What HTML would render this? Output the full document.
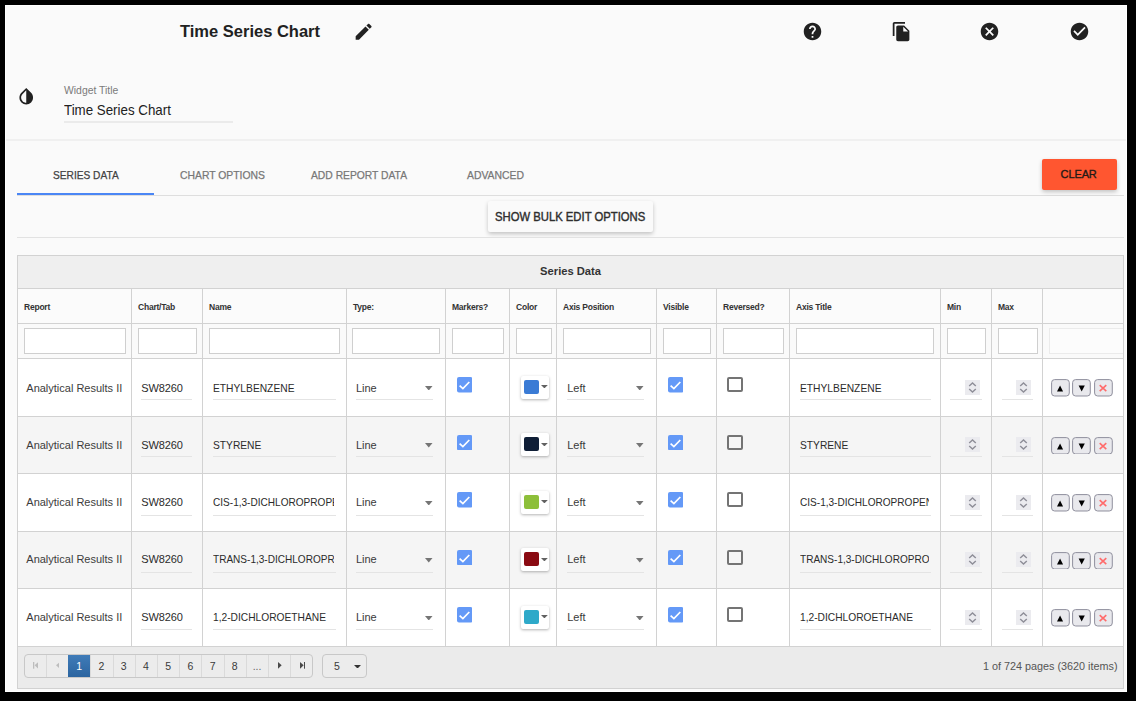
<!DOCTYPE html>
<html><head><meta charset="utf-8"><style>
html,body{margin:0;padding:0;background:#000;width:1136px;height:701px;overflow:hidden;position:relative;font-family:"Liberation Sans", sans-serif}
.t{position:absolute;line-height:1;white-space:nowrap}
</style></head><body>
<div style="position:absolute;left:5px;top:5px;width:1122px;height:687px;background:#fafafa;border:1px solid #fff;box-sizing:border-box"></div>
<div class="t" style="left:180px;top:23.03px;font-size:16.5px;color:#212121;font-weight:700;letter-spacing:0px;">Time Series Chart</div>
<svg style="position:absolute;left:353.35px;top:21.15px" width="21.3" height="21.3" viewBox="0 0 24 24"><path fill="#212121" d="M3 17.25V21h3.75L17.81 9.94l-3.75-3.75L3 17.25zM20.71 7.04c.39-.39.39-1.02 0-1.41l-2.34-2.34c-.39-.39-1.02-.39-1.41 0l-1.83 1.83 3.75 3.75 1.83-1.83z"/></svg>
<svg style="position:absolute;left:801.60px;top:21.30px" width="21" height="21" viewBox="0 0 24 24"><path fill="#212121" d="M12 2C6.48 2 2 6.48 2 12s4.48 10 10 10 10-4.48 10-10S17.52 2 12 2zm1 17h-2v-2h2v2zm2.07-7.75l-.9.92C13.45 12.9 13 13.5 13 15h-2v-.5c0-1.1.45-2.1 1.17-2.83l1.24-1.26c.37-.36.59-.86.59-1.41 0-1.1-.9-2-2-2s-2 .9-2 2H8c0-2.21 1.79-4 4-4s4 1.79 4 4c0 .88-.36 1.68-.93 2.25z"/></svg>
<svg style="position:absolute;left:891.00px;top:21.40px" width="21" height="21" viewBox="0 0 24 24"><path fill="#212121" d="M16 1H4c-1.1 0-2 .9-2 2v14h2V3h12V1zm-1 4l6 6v10c0 1.1-.9 2-2 2H7.99C6.89 23 6 22.1 6 21l.01-14c0-1.1.89-2 1.99-2h7zm-1 7h5.5L14 6.5V12z"/></svg>
<svg style="position:absolute;left:979.00px;top:21.40px" width="21" height="21" viewBox="0 0 24 24"><path fill="#212121" d="M12 2C6.47 2 2 6.47 2 12s4.47 10 10 10 10-4.47 10-10S17.53 2 12 2zm5 13.59L15.59 17 12 13.41 8.41 17 7 15.59 10.59 12 7 8.41 8.41 7 12 10.59 15.59 7 17 8.41 13.41 12 17 15.59z"/></svg>
<svg style="position:absolute;left:1068.50px;top:21.40px" width="21" height="21" viewBox="0 0 24 24"><path fill="#212121" d="M12 2C6.48 2 2 6.48 2 12s4.48 10 10 10 10-4.48 10-10S17.52 2 12 2zm-2 15l-5-5 1.41-1.41L10 14.17l7.59-7.59L19 8l-9 9z"/></svg>
<svg style="position:absolute;left:15.80px;top:86.25px" width="20.5" height="20.5" viewBox="0 0 24 24"><path fill="#212121" d="M17.66 7.93L12 2.27 6.34 7.93c-3.12 3.12-3.12 8.19 0 11.31C7.9 20.8 9.95 21.58 12 21.58c2.05 0 4.1-.78 5.66-2.34 3.12-3.12 3.12-8.19 0-11.31zM12 19.59c-1.6 0-3.11-.62-4.24-1.76C6.62 16.69 6 15.19 6 13.59s.62-3.11 1.76-4.24L12 5.1v14.49z"/></svg>
<div class="t" style="left:64px;top:85.60px;font-size:10.4px;color:#7b7b7b;font-weight:400;letter-spacing:0px;">Widget Title</div>
<div class="t" style="left:64.2px;top:102.64px;font-size:14.6px;color:#212121;font-weight:400;letter-spacing:0px;transform:scaleX(0.913);transform-origin:0 0">Time Series Chart</div>
<div style="position:absolute;left:64px;top:121px;width:169px;height:2px;background:#ebebeb"></div>
<div style="position:absolute;left:6px;top:139px;width:1120px;height:2px;background:#f0f0f0"></div>
<div class="t" style="left:53px;top:169.69px;font-size:11px;color:#424242;font-weight:400;letter-spacing:0px;-webkit-text-stroke:0.25px #424242;transform:scaleX(0.924);transform-origin:0 0">SERIES DATA</div>
<div class="t" style="left:179.8px;top:169.69px;font-size:11px;color:#777;font-weight:400;letter-spacing:0px;-webkit-text-stroke:0.25px #777;transform:scaleX(0.944);transform-origin:0 0">CHART OPTIONS</div>
<div class="t" style="left:311px;top:169.69px;font-size:11px;color:#777;font-weight:400;letter-spacing:0px;-webkit-text-stroke:0.25px #777;transform:scaleX(0.937);transform-origin:0 0">ADD REPORT DATA</div>
<div class="t" style="left:467.4px;top:169.69px;font-size:11px;color:#777;font-weight:400;letter-spacing:0px;-webkit-text-stroke:0.25px #777;transform:scaleX(0.945);transform-origin:0 0">ADVANCED</div>
<div style="position:absolute;left:17px;top:195px;width:1107px;height:1px;background:#dedede"></div>
<div style="position:absolute;left:17px;top:193px;width:137px;height:2px;background:#4a86f5"></div>
<div style="position:absolute;left:1041.8px;top:159px;width:75.2px;height:31px;background:#ff5630;border-radius:2px;box-shadow:0 2px 4px rgba(0,0,0,.22)"></div>
<div class="t" style="left:1060.6px;top:169.19px;font-size:11px;color:#241a16;font-weight:400;letter-spacing:-0.12px;-webkit-text-stroke:0.35px #241a16">CLEAR</div>
<div style="position:absolute;left:488px;top:201px;width:165px;height:31px;background:#fafafa;border-radius:2px;box-shadow:0 2px 4px rgba(0,0,0,.22)"></div>
<div class="t" style="left:495.2px;top:211.04px;font-size:12px;color:#2e2e2e;font-weight:400;letter-spacing:0px;-webkit-text-stroke:0.4px #2e2e2e;transform:scaleX(0.94);transform-origin:0 0">SHOW BULK EDIT OPTIONS</div>
<div style="position:absolute;left:17px;top:237px;width:1107px;height:1px;background:#e2e2e2"></div>
<div style="position:absolute;left:17px;top:255px;width:1107px;height:433px;background:#fff"></div>
<div style="position:absolute;left:17px;top:255px;width:1107px;height:33px;background:#efefef"></div>
<div style="position:absolute;left:17px;top:288px;width:1107px;height:35px;background:#fbfbfb"></div>
<div style="position:absolute;left:17px;top:323px;width:1107px;height:35px;background:#fafafa"></div>
<div style="position:absolute;left:17px;top:358px;width:1107px;height:58px;background:#fff"></div>
<div style="position:absolute;left:17px;top:416px;width:1107px;height:57px;background:#f5f5f5"></div>
<div style="position:absolute;left:17px;top:473px;width:1107px;height:58px;background:#fff"></div>
<div style="position:absolute;left:17px;top:531px;width:1107px;height:57px;background:#f5f5f5"></div>
<div style="position:absolute;left:17px;top:588px;width:1107px;height:58px;background:#fff"></div>
<div style="position:absolute;left:17px;top:646px;width:1107px;height:42px;background:#ebebeb"></div>
<div style="position:absolute;left:17px;top:255px;width:1107px;height:1px;background:#d2d2d2"></div>
<div style="position:absolute;left:17px;top:288px;width:1107px;height:1px;background:#d2d2d2"></div>
<div style="position:absolute;left:17px;top:323px;width:1107px;height:1px;background:#d2d2d2"></div>
<div style="position:absolute;left:17px;top:358px;width:1107px;height:1px;background:#d2d2d2"></div>
<div style="position:absolute;left:17px;top:416px;width:1107px;height:1px;background:#d2d2d2"></div>
<div style="position:absolute;left:17px;top:473px;width:1107px;height:1px;background:#d2d2d2"></div>
<div style="position:absolute;left:17px;top:531px;width:1107px;height:1px;background:#d2d2d2"></div>
<div style="position:absolute;left:17px;top:588px;width:1107px;height:1px;background:#d2d2d2"></div>
<div style="position:absolute;left:17px;top:646px;width:1107px;height:1px;background:#d2d2d2"></div>
<div style="position:absolute;left:17px;top:688px;width:1107px;height:1px;background:#d2d2d2"></div>
<div style="position:absolute;left:17px;top:255px;width:1px;height:434px;background:#d2d2d2"></div>
<div style="position:absolute;left:1123px;top:255px;width:1px;height:434px;background:#d2d2d2"></div>
<div style="position:absolute;left:131px;top:288px;width:1px;height:358px;background:#d2d2d2"></div>
<div style="position:absolute;left:202px;top:288px;width:1px;height:358px;background:#d2d2d2"></div>
<div style="position:absolute;left:346px;top:288px;width:1px;height:358px;background:#d2d2d2"></div>
<div style="position:absolute;left:445px;top:288px;width:1px;height:358px;background:#d2d2d2"></div>
<div style="position:absolute;left:509px;top:288px;width:1px;height:358px;background:#d2d2d2"></div>
<div style="position:absolute;left:556px;top:288px;width:1px;height:358px;background:#d2d2d2"></div>
<div style="position:absolute;left:656px;top:288px;width:1px;height:358px;background:#d2d2d2"></div>
<div style="position:absolute;left:716px;top:288px;width:1px;height:358px;background:#d2d2d2"></div>
<div style="position:absolute;left:789px;top:288px;width:1px;height:358px;background:#d2d2d2"></div>
<div style="position:absolute;left:940px;top:288px;width:1px;height:358px;background:#d2d2d2"></div>
<div style="position:absolute;left:991px;top:288px;width:1px;height:358px;background:#d2d2d2"></div>
<div style="position:absolute;left:1042px;top:288px;width:1px;height:358px;background:#d2d2d2"></div>
<div class="t" style="left:540.1px;top:265.72px;font-size:11.2px;color:#333;font-weight:700;letter-spacing:0px;">Series Data</div>
<div class="t" style="left:24px;top:302.60px;font-size:8.5px;color:#333;font-weight:700;letter-spacing:-0.22px;">Report</div>
<div class="t" style="left:138px;top:302.60px;font-size:8.5px;color:#333;font-weight:700;letter-spacing:-0.22px;">Chart/Tab</div>
<div class="t" style="left:209px;top:302.60px;font-size:8.5px;color:#333;font-weight:700;letter-spacing:-0.22px;">Name</div>
<div class="t" style="left:353px;top:302.60px;font-size:8.5px;color:#333;font-weight:700;letter-spacing:-0.22px;">Type:</div>
<div class="t" style="left:452px;top:302.60px;font-size:8.5px;color:#333;font-weight:700;letter-spacing:-0.22px;">Markers?</div>
<div class="t" style="left:516px;top:302.60px;font-size:8.5px;color:#333;font-weight:700;letter-spacing:-0.22px;">Color</div>
<div class="t" style="left:563px;top:302.60px;font-size:8.5px;color:#333;font-weight:700;letter-spacing:-0.22px;">Axis Position</div>
<div class="t" style="left:663px;top:302.60px;font-size:8.5px;color:#333;font-weight:700;letter-spacing:-0.22px;">Visible</div>
<div class="t" style="left:723px;top:302.60px;font-size:8.5px;color:#333;font-weight:700;letter-spacing:-0.22px;">Reversed?</div>
<div class="t" style="left:796px;top:302.60px;font-size:8.5px;color:#333;font-weight:700;letter-spacing:-0.22px;">Axis Title</div>
<div class="t" style="left:947px;top:302.60px;font-size:8.5px;color:#333;font-weight:700;letter-spacing:-0.22px;">Min</div>
<div class="t" style="left:998px;top:302.60px;font-size:8.5px;color:#333;font-weight:700;letter-spacing:-0.22px;">Max</div>
<div style="position:absolute;left:24px;top:328px;width:102px;height:26px;background:#fff;border:1px solid #cfcfcf;box-sizing:border-box"></div>
<div style="position:absolute;left:138px;top:328px;width:59px;height:26px;background:#fff;border:1px solid #cfcfcf;box-sizing:border-box"></div>
<div style="position:absolute;left:209px;top:328px;width:131px;height:26px;background:#fff;border:1px solid #cfcfcf;box-sizing:border-box"></div>
<div style="position:absolute;left:352px;top:328px;width:88px;height:26px;background:#fff;border:1px solid #cfcfcf;box-sizing:border-box"></div>
<div style="position:absolute;left:452px;top:328px;width:52px;height:26px;background:#fff;border:1px solid #cfcfcf;box-sizing:border-box"></div>
<div style="position:absolute;left:516px;top:328px;width:36px;height:26px;background:#fff;border:1px solid #cfcfcf;box-sizing:border-box"></div>
<div style="position:absolute;left:563px;top:328px;width:88px;height:26px;background:#fff;border:1px solid #cfcfcf;box-sizing:border-box"></div>
<div style="position:absolute;left:663px;top:328px;width:48px;height:26px;background:#fff;border:1px solid #cfcfcf;box-sizing:border-box"></div>
<div style="position:absolute;left:723px;top:328px;width:61px;height:26px;background:#fff;border:1px solid #cfcfcf;box-sizing:border-box"></div>
<div style="position:absolute;left:796px;top:328px;width:138px;height:26px;background:#fff;border:1px solid #cfcfcf;box-sizing:border-box"></div>
<div style="position:absolute;left:947px;top:328px;width:39px;height:26px;background:#fff;border:1px solid #cfcfcf;box-sizing:border-box"></div>
<div style="position:absolute;left:998px;top:328px;width:40px;height:26px;background:#fff;border:1px solid #cfcfcf;box-sizing:border-box"></div>
<div style="position:absolute;left:1049px;top:328px;width:74px;height:26px;background:#fcfcfc;border:1px solid #ebebeb;border-right:none;box-sizing:border-box"></div>
<div class="t" style="left:26.3px;top:382.59px;font-size:11px;color:#3c3c3c;font-weight:400;letter-spacing:0px;">Analytical Results II</div>
<div class="t" style="left:141.2px;top:382.59px;font-size:11px;color:#2b2b2b;font-weight:400;letter-spacing:-0.1px;">SW8260</div>
<div style="position:absolute;left:141px;top:399px;width:51px;height:1px;background:#e4e4e4"></div>
<div style="position:absolute;left:212.7px;top:379.59px;width:121.6px;height:18px;overflow:hidden"><div class="t" style="left:0;top:3px;font-size:11px;color:#2b2b2b;transform:scaleX(0.932);transform-origin:0 0">ETHYLBENZENE</div></div>
<div style="position:absolute;left:213px;top:399px;width:123px;height:1px;background:#e4e4e4"></div>
<div class="t" style="left:355.9px;top:382.59px;font-size:11px;color:#3a3a3a;font-weight:400;letter-spacing:0px;">Line</div>
<svg style="position:absolute;left:425.3px;top:385.50px" width="7.5" height="4.5" viewBox="0 0 7.5 4.5"><path d="M0 0H7.5L3.75 4.5Z" fill="#757575"/></svg>
<div style="position:absolute;left:356px;top:399px;width:77px;height:1px;background:#e4e4e4"></div>
<svg style="position:absolute;left:456.6px;top:377.1px" width="15.5" height="15.5" viewBox="0 0 15.5 15.5"><rect x="0" y="0" width="15.5" height="15.5" rx="2" fill="#6499f7"/><path d="M2.6 8.6 L5.9 11.6 L12.3 5" stroke="#fff" stroke-width="1.7" fill="none"/></svg>
<div style="position:absolute;left:520.8px;top:375.6px;width:28.4px;height:23px;background:#fff;border-radius:2px;box-shadow:0 1px 3px rgba(0,0,0,.3)"></div>
<div style="position:absolute;left:524px;top:379.7px;width:14.8px;height:14.3px;background:#3a7bd5;border-radius:2px"></div>
<svg style="position:absolute;left:541.2px;top:385.00px" width="6.8" height="3.4" viewBox="0 0 6.8 3.4"><path d="M0 0H6.8L3.4 3.4Z" fill="#616161"/></svg>
<div class="t" style="left:567.2px;top:382.59px;font-size:11px;color:#3a3a3a;font-weight:400;letter-spacing:0px;">Left</div>
<svg style="position:absolute;left:636.3px;top:385.50px" width="7.5" height="4.5" viewBox="0 0 7.5 4.5"><path d="M0 0H7.5L3.75 4.5Z" fill="#757575"/></svg>
<div style="position:absolute;left:567px;top:399px;width:77px;height:1px;background:#e4e4e4"></div>
<svg style="position:absolute;left:667.7px;top:377.1px" width="15.5" height="15.5" viewBox="0 0 15.5 15.5"><rect x="0" y="0" width="15.5" height="15.5" rx="2" fill="#6499f7"/><path d="M2.6 8.6 L5.9 11.6 L12.3 5" stroke="#fff" stroke-width="1.7" fill="none"/></svg>
<div style="position:absolute;left:727.3px;top:377.3px;width:15.5px;height:15px;border:2px solid #747474;border-radius:2px;box-sizing:border-box"></div>
<div style="position:absolute;left:799.6px;top:379.59px;width:129.4px;height:18px;overflow:hidden"><div class="t" style="left:0;top:3px;font-size:11px;color:#2b2b2b;transform:scaleX(0.932);transform-origin:0 0">ETHYLBENZENE</div></div>
<div style="position:absolute;left:800px;top:399px;width:131px;height:1px;background:#e4e4e4"></div>
<div style="position:absolute;left:965px;top:379.9px;width:15px;height:15px;background:#ebebef"></div>
<svg style="position:absolute;left:965px;top:379.90px" width="15" height="15" viewBox="0 0 15 15"><path d="M4.2 6.0 L7.5 2.9 L10.8 6.0 M4.2 9.0 L7.5 12.1 L10.8 9.0" stroke="#8e8e98" stroke-width="1.4" fill="none"/></svg>
<div style="position:absolute;left:950px;top:399px;width:32px;height:1px;background:#e4e4e4"></div>
<div style="position:absolute;left:1016px;top:379.9px;width:15px;height:15px;background:#ebebef"></div>
<svg style="position:absolute;left:1016px;top:379.90px" width="15" height="15" viewBox="0 0 15 15"><path d="M4.2 6.0 L7.5 2.9 L10.8 6.0 M4.2 9.0 L7.5 12.1 L10.8 9.0" stroke="#8e8e98" stroke-width="1.4" fill="none"/></svg>
<div style="position:absolute;left:1001.5px;top:399px;width:31.5px;height:1px;background:#e4e4e4"></div>
<svg style="position:absolute;left:1051.2px;top:379.2px" width="18.9" height="17.6" viewBox="0 0 18.9 17.6"><rect x="0.6" y="0.6" width="17.7" height="16.4" rx="3" fill="#e9e9ed" stroke="#8f8f9d" stroke-width="1"/><path d="M6.0 12.6 L9.1 6.6 L12.1 12.6Z" fill="#000"/></svg>
<svg style="position:absolute;left:1072.3px;top:379.2px" width="18.9" height="17.6" viewBox="0 0 18.9 17.6"><rect x="0.6" y="0.6" width="17.7" height="16.4" rx="3" fill="#e9e9ed" stroke="#8f8f9d" stroke-width="1"/><path d="M6.6 6.6 L12.8 6.6 L9.7 12.6Z" fill="#000"/></svg>
<svg style="position:absolute;left:1094.2px;top:379.2px" width="18.9" height="17.6" viewBox="0 0 18.9 17.6"><rect x="0.6" y="0.6" width="17.7" height="16.4" rx="3" fill="#e9e9ed" stroke="#8f8f9d" stroke-width="1"/><path d="M5.7 6.2 L12.3 12.2 M12.3 6.2 L5.7 12.2" stroke="#ff6b6b" stroke-width="1.6"/></svg>
<div class="t" style="left:26.3px;top:439.59px;font-size:11px;color:#3c3c3c;font-weight:400;letter-spacing:0px;">Analytical Results II</div>
<div class="t" style="left:141.2px;top:439.59px;font-size:11px;color:#2b2b2b;font-weight:400;letter-spacing:-0.1px;">SW8260</div>
<div style="position:absolute;left:141px;top:456px;width:51px;height:1px;background:#e4e4e4"></div>
<div style="position:absolute;left:212.7px;top:436.59px;width:121.6px;height:18px;overflow:hidden"><div class="t" style="left:0;top:3px;font-size:11px;color:#2b2b2b;transform:scaleX(0.93);transform-origin:0 0">STYRENE</div></div>
<div style="position:absolute;left:213px;top:456px;width:123px;height:1px;background:#e4e4e4"></div>
<div class="t" style="left:355.9px;top:439.59px;font-size:11px;color:#3a3a3a;font-weight:400;letter-spacing:0px;">Line</div>
<svg style="position:absolute;left:425.3px;top:443.00px" width="7.5" height="4.5" viewBox="0 0 7.5 4.5"><path d="M0 0H7.5L3.75 4.5Z" fill="#757575"/></svg>
<div style="position:absolute;left:356px;top:456px;width:77px;height:1px;background:#e4e4e4"></div>
<svg style="position:absolute;left:456.6px;top:434.6px" width="15.5" height="15.5" viewBox="0 0 15.5 15.5"><rect x="0" y="0" width="15.5" height="15.5" rx="2" fill="#6499f7"/><path d="M2.6 8.6 L5.9 11.6 L12.3 5" stroke="#fff" stroke-width="1.7" fill="none"/></svg>
<div style="position:absolute;left:520.8px;top:433.1px;width:28.4px;height:23px;background:#fff;border-radius:2px;box-shadow:0 1px 3px rgba(0,0,0,.3)"></div>
<div style="position:absolute;left:524px;top:437.2px;width:14.8px;height:14.3px;background:#0f1e36;border-radius:2px"></div>
<svg style="position:absolute;left:541.2px;top:442.50px" width="6.8" height="3.4" viewBox="0 0 6.8 3.4"><path d="M0 0H6.8L3.4 3.4Z" fill="#616161"/></svg>
<div class="t" style="left:567.2px;top:439.59px;font-size:11px;color:#3a3a3a;font-weight:400;letter-spacing:0px;">Left</div>
<svg style="position:absolute;left:636.3px;top:443.00px" width="7.5" height="4.5" viewBox="0 0 7.5 4.5"><path d="M0 0H7.5L3.75 4.5Z" fill="#757575"/></svg>
<div style="position:absolute;left:567px;top:456px;width:77px;height:1px;background:#e4e4e4"></div>
<svg style="position:absolute;left:667.7px;top:434.6px" width="15.5" height="15.5" viewBox="0 0 15.5 15.5"><rect x="0" y="0" width="15.5" height="15.5" rx="2" fill="#6499f7"/><path d="M2.6 8.6 L5.9 11.6 L12.3 5" stroke="#fff" stroke-width="1.7" fill="none"/></svg>
<div style="position:absolute;left:727.3px;top:434.8px;width:15.5px;height:15px;border:2px solid #747474;border-radius:2px;box-sizing:border-box"></div>
<div style="position:absolute;left:799.6px;top:436.59px;width:129.4px;height:18px;overflow:hidden"><div class="t" style="left:0;top:3px;font-size:11px;color:#2b2b2b;transform:scaleX(0.93);transform-origin:0 0">STYRENE</div></div>
<div style="position:absolute;left:800px;top:456px;width:131px;height:1px;background:#e4e4e4"></div>
<div style="position:absolute;left:965px;top:437.4px;width:15px;height:15px;background:#ebebef"></div>
<svg style="position:absolute;left:965px;top:437.40px" width="15" height="15" viewBox="0 0 15 15"><path d="M4.2 6.0 L7.5 2.9 L10.8 6.0 M4.2 9.0 L7.5 12.1 L10.8 9.0" stroke="#8e8e98" stroke-width="1.4" fill="none"/></svg>
<div style="position:absolute;left:950px;top:456px;width:32px;height:1px;background:#e4e4e4"></div>
<div style="position:absolute;left:1016px;top:437.4px;width:15px;height:15px;background:#ebebef"></div>
<svg style="position:absolute;left:1016px;top:437.40px" width="15" height="15" viewBox="0 0 15 15"><path d="M4.2 6.0 L7.5 2.9 L10.8 6.0 M4.2 9.0 L7.5 12.1 L10.8 9.0" stroke="#8e8e98" stroke-width="1.4" fill="none"/></svg>
<div style="position:absolute;left:1001.5px;top:456px;width:31.5px;height:1px;background:#e4e4e4"></div>
<svg style="position:absolute;left:1051.2px;top:436.7px" width="18.9" height="17.6" viewBox="0 0 18.9 17.6"><rect x="0.6" y="0.6" width="17.7" height="16.4" rx="3" fill="#e9e9ed" stroke="#8f8f9d" stroke-width="1"/><path d="M6.0 12.6 L9.1 6.6 L12.1 12.6Z" fill="#000"/></svg>
<svg style="position:absolute;left:1072.3px;top:436.7px" width="18.9" height="17.6" viewBox="0 0 18.9 17.6"><rect x="0.6" y="0.6" width="17.7" height="16.4" rx="3" fill="#e9e9ed" stroke="#8f8f9d" stroke-width="1"/><path d="M6.6 6.6 L12.8 6.6 L9.7 12.6Z" fill="#000"/></svg>
<svg style="position:absolute;left:1094.2px;top:436.7px" width="18.9" height="17.6" viewBox="0 0 18.9 17.6"><rect x="0.6" y="0.6" width="17.7" height="16.4" rx="3" fill="#e9e9ed" stroke="#8f8f9d" stroke-width="1"/><path d="M5.7 6.2 L12.3 12.2 M12.3 6.2 L5.7 12.2" stroke="#ff6b6b" stroke-width="1.6"/></svg>
<div class="t" style="left:26.3px;top:496.59px;font-size:11px;color:#3c3c3c;font-weight:400;letter-spacing:0px;">Analytical Results II</div>
<div class="t" style="left:141.2px;top:496.59px;font-size:11px;color:#2b2b2b;font-weight:400;letter-spacing:-0.1px;">SW8260</div>
<div style="position:absolute;left:141px;top:515px;width:51px;height:1px;background:#e4e4e4"></div>
<div style="position:absolute;left:212.7px;top:493.59px;width:121.6px;height:18px;overflow:hidden"><div class="t" style="left:0;top:3px;font-size:11px;color:#2b2b2b;transform:scaleX(0.915);transform-origin:0 0">CIS-1,3-DICHLOROPROPENE</div></div>
<div style="position:absolute;left:213px;top:515px;width:123px;height:1px;background:#e4e4e4"></div>
<div class="t" style="left:355.9px;top:496.59px;font-size:11px;color:#3a3a3a;font-weight:400;letter-spacing:0px;">Line</div>
<svg style="position:absolute;left:425.3px;top:500.50px" width="7.5" height="4.5" viewBox="0 0 7.5 4.5"><path d="M0 0H7.5L3.75 4.5Z" fill="#757575"/></svg>
<div style="position:absolute;left:356px;top:515px;width:77px;height:1px;background:#e4e4e4"></div>
<svg style="position:absolute;left:456.6px;top:492.1px" width="15.5" height="15.5" viewBox="0 0 15.5 15.5"><rect x="0" y="0" width="15.5" height="15.5" rx="2" fill="#6499f7"/><path d="M2.6 8.6 L5.9 11.6 L12.3 5" stroke="#fff" stroke-width="1.7" fill="none"/></svg>
<div style="position:absolute;left:520.8px;top:490.6px;width:28.4px;height:23px;background:#fff;border-radius:2px;box-shadow:0 1px 3px rgba(0,0,0,.3)"></div>
<div style="position:absolute;left:524px;top:494.7px;width:14.8px;height:14.3px;background:#8dbf3a;border-radius:2px"></div>
<svg style="position:absolute;left:541.2px;top:500.00px" width="6.8" height="3.4" viewBox="0 0 6.8 3.4"><path d="M0 0H6.8L3.4 3.4Z" fill="#616161"/></svg>
<div class="t" style="left:567.2px;top:496.59px;font-size:11px;color:#3a3a3a;font-weight:400;letter-spacing:0px;">Left</div>
<svg style="position:absolute;left:636.3px;top:500.50px" width="7.5" height="4.5" viewBox="0 0 7.5 4.5"><path d="M0 0H7.5L3.75 4.5Z" fill="#757575"/></svg>
<div style="position:absolute;left:567px;top:515px;width:77px;height:1px;background:#e4e4e4"></div>
<svg style="position:absolute;left:667.7px;top:492.1px" width="15.5" height="15.5" viewBox="0 0 15.5 15.5"><rect x="0" y="0" width="15.5" height="15.5" rx="2" fill="#6499f7"/><path d="M2.6 8.6 L5.9 11.6 L12.3 5" stroke="#fff" stroke-width="1.7" fill="none"/></svg>
<div style="position:absolute;left:727.3px;top:492.3px;width:15.5px;height:15px;border:2px solid #747474;border-radius:2px;box-sizing:border-box"></div>
<div style="position:absolute;left:799.6px;top:493.59px;width:129.4px;height:18px;overflow:hidden"><div class="t" style="left:0;top:3px;font-size:11px;color:#2b2b2b;transform:scaleX(0.915);transform-origin:0 0">CIS-1,3-DICHLOROPROPENE</div></div>
<div style="position:absolute;left:800px;top:515px;width:131px;height:1px;background:#e4e4e4"></div>
<div style="position:absolute;left:965px;top:494.9px;width:15px;height:15px;background:#ebebef"></div>
<svg style="position:absolute;left:965px;top:494.90px" width="15" height="15" viewBox="0 0 15 15"><path d="M4.2 6.0 L7.5 2.9 L10.8 6.0 M4.2 9.0 L7.5 12.1 L10.8 9.0" stroke="#8e8e98" stroke-width="1.4" fill="none"/></svg>
<div style="position:absolute;left:950px;top:515px;width:32px;height:1px;background:#e4e4e4"></div>
<div style="position:absolute;left:1016px;top:494.9px;width:15px;height:15px;background:#ebebef"></div>
<svg style="position:absolute;left:1016px;top:494.90px" width="15" height="15" viewBox="0 0 15 15"><path d="M4.2 6.0 L7.5 2.9 L10.8 6.0 M4.2 9.0 L7.5 12.1 L10.8 9.0" stroke="#8e8e98" stroke-width="1.4" fill="none"/></svg>
<div style="position:absolute;left:1001.5px;top:515px;width:31.5px;height:1px;background:#e4e4e4"></div>
<svg style="position:absolute;left:1051.2px;top:494.2px" width="18.9" height="17.6" viewBox="0 0 18.9 17.6"><rect x="0.6" y="0.6" width="17.7" height="16.4" rx="3" fill="#e9e9ed" stroke="#8f8f9d" stroke-width="1"/><path d="M6.0 12.6 L9.1 6.6 L12.1 12.6Z" fill="#000"/></svg>
<svg style="position:absolute;left:1072.3px;top:494.2px" width="18.9" height="17.6" viewBox="0 0 18.9 17.6"><rect x="0.6" y="0.6" width="17.7" height="16.4" rx="3" fill="#e9e9ed" stroke="#8f8f9d" stroke-width="1"/><path d="M6.6 6.6 L12.8 6.6 L9.7 12.6Z" fill="#000"/></svg>
<svg style="position:absolute;left:1094.2px;top:494.2px" width="18.9" height="17.6" viewBox="0 0 18.9 17.6"><rect x="0.6" y="0.6" width="17.7" height="16.4" rx="3" fill="#e9e9ed" stroke="#8f8f9d" stroke-width="1"/><path d="M5.7 6.2 L12.3 12.2 M12.3 6.2 L5.7 12.2" stroke="#ff6b6b" stroke-width="1.6"/></svg>
<div class="t" style="left:26.3px;top:554.29px;font-size:11px;color:#3c3c3c;font-weight:400;letter-spacing:0px;">Analytical Results II</div>
<div class="t" style="left:141.2px;top:554.29px;font-size:11px;color:#2b2b2b;font-weight:400;letter-spacing:-0.1px;">SW8260</div>
<div style="position:absolute;left:141px;top:572px;width:51px;height:1px;background:#e4e4e4"></div>
<div style="position:absolute;left:212.7px;top:551.29px;width:121.6px;height:18px;overflow:hidden"><div class="t" style="left:0;top:3px;font-size:11px;color:#2b2b2b;transform:scaleX(0.913);transform-origin:0 0">TRANS-1,3-DICHLOROPROPENE</div></div>
<div style="position:absolute;left:213px;top:572px;width:123px;height:1px;background:#e4e4e4"></div>
<div class="t" style="left:355.9px;top:554.29px;font-size:11px;color:#3a3a3a;font-weight:400;letter-spacing:0px;">Line</div>
<svg style="position:absolute;left:425.3px;top:558.00px" width="7.5" height="4.5" viewBox="0 0 7.5 4.5"><path d="M0 0H7.5L3.75 4.5Z" fill="#757575"/></svg>
<div style="position:absolute;left:356px;top:572px;width:77px;height:1px;background:#e4e4e4"></div>
<svg style="position:absolute;left:456.6px;top:549.6px" width="15.5" height="15.5" viewBox="0 0 15.5 15.5"><rect x="0" y="0" width="15.5" height="15.5" rx="2" fill="#6499f7"/><path d="M2.6 8.6 L5.9 11.6 L12.3 5" stroke="#fff" stroke-width="1.7" fill="none"/></svg>
<div style="position:absolute;left:520.8px;top:548.1px;width:28.4px;height:23px;background:#fff;border-radius:2px;box-shadow:0 1px 3px rgba(0,0,0,.3)"></div>
<div style="position:absolute;left:524px;top:552.2px;width:14.8px;height:14.3px;background:#8a0a12;border-radius:2px"></div>
<svg style="position:absolute;left:541.2px;top:557.50px" width="6.8" height="3.4" viewBox="0 0 6.8 3.4"><path d="M0 0H6.8L3.4 3.4Z" fill="#616161"/></svg>
<div class="t" style="left:567.2px;top:554.29px;font-size:11px;color:#3a3a3a;font-weight:400;letter-spacing:0px;">Left</div>
<svg style="position:absolute;left:636.3px;top:558.00px" width="7.5" height="4.5" viewBox="0 0 7.5 4.5"><path d="M0 0H7.5L3.75 4.5Z" fill="#757575"/></svg>
<div style="position:absolute;left:567px;top:572px;width:77px;height:1px;background:#e4e4e4"></div>
<svg style="position:absolute;left:667.7px;top:549.6px" width="15.5" height="15.5" viewBox="0 0 15.5 15.5"><rect x="0" y="0" width="15.5" height="15.5" rx="2" fill="#6499f7"/><path d="M2.6 8.6 L5.9 11.6 L12.3 5" stroke="#fff" stroke-width="1.7" fill="none"/></svg>
<div style="position:absolute;left:727.3px;top:549.8px;width:15.5px;height:15px;border:2px solid #747474;border-radius:2px;box-sizing:border-box"></div>
<div style="position:absolute;left:799.6px;top:551.29px;width:129.4px;height:18px;overflow:hidden"><div class="t" style="left:0;top:3px;font-size:11px;color:#2b2b2b;transform:scaleX(0.913);transform-origin:0 0">TRANS-1,3-DICHLOROPROPENE</div></div>
<div style="position:absolute;left:800px;top:572px;width:131px;height:1px;background:#e4e4e4"></div>
<div style="position:absolute;left:965px;top:552.4px;width:15px;height:15px;background:#ebebef"></div>
<svg style="position:absolute;left:965px;top:552.40px" width="15" height="15" viewBox="0 0 15 15"><path d="M4.2 6.0 L7.5 2.9 L10.8 6.0 M4.2 9.0 L7.5 12.1 L10.8 9.0" stroke="#8e8e98" stroke-width="1.4" fill="none"/></svg>
<div style="position:absolute;left:950px;top:572px;width:32px;height:1px;background:#e4e4e4"></div>
<div style="position:absolute;left:1016px;top:552.4px;width:15px;height:15px;background:#ebebef"></div>
<svg style="position:absolute;left:1016px;top:552.40px" width="15" height="15" viewBox="0 0 15 15"><path d="M4.2 6.0 L7.5 2.9 L10.8 6.0 M4.2 9.0 L7.5 12.1 L10.8 9.0" stroke="#8e8e98" stroke-width="1.4" fill="none"/></svg>
<div style="position:absolute;left:1001.5px;top:572px;width:31.5px;height:1px;background:#e4e4e4"></div>
<svg style="position:absolute;left:1051.2px;top:551.7px" width="18.9" height="17.6" viewBox="0 0 18.9 17.6"><rect x="0.6" y="0.6" width="17.7" height="16.4" rx="3" fill="#e9e9ed" stroke="#8f8f9d" stroke-width="1"/><path d="M6.0 12.6 L9.1 6.6 L12.1 12.6Z" fill="#000"/></svg>
<svg style="position:absolute;left:1072.3px;top:551.7px" width="18.9" height="17.6" viewBox="0 0 18.9 17.6"><rect x="0.6" y="0.6" width="17.7" height="16.4" rx="3" fill="#e9e9ed" stroke="#8f8f9d" stroke-width="1"/><path d="M6.6 6.6 L12.8 6.6 L9.7 12.6Z" fill="#000"/></svg>
<svg style="position:absolute;left:1094.2px;top:551.7px" width="18.9" height="17.6" viewBox="0 0 18.9 17.6"><rect x="0.6" y="0.6" width="17.7" height="16.4" rx="3" fill="#e9e9ed" stroke="#8f8f9d" stroke-width="1"/><path d="M5.7 6.2 L12.3 12.2 M12.3 6.2 L5.7 12.2" stroke="#ff6b6b" stroke-width="1.6"/></svg>
<div class="t" style="left:26.3px;top:611.59px;font-size:11px;color:#3c3c3c;font-weight:400;letter-spacing:0px;">Analytical Results II</div>
<div class="t" style="left:141.2px;top:611.59px;font-size:11px;color:#2b2b2b;font-weight:400;letter-spacing:-0.1px;">SW8260</div>
<div style="position:absolute;left:141px;top:629px;width:51px;height:1px;background:#e4e4e4"></div>
<div style="position:absolute;left:212.7px;top:608.59px;width:121.6px;height:18px;overflow:hidden"><div class="t" style="left:0;top:3px;font-size:11px;color:#2b2b2b;transform:scaleX(0.929);transform-origin:0 0">1,2-DICHLOROETHANE</div></div>
<div style="position:absolute;left:213px;top:629px;width:123px;height:1px;background:#e4e4e4"></div>
<div class="t" style="left:355.9px;top:611.59px;font-size:11px;color:#3a3a3a;font-weight:400;letter-spacing:0px;">Line</div>
<svg style="position:absolute;left:425.3px;top:615.50px" width="7.5" height="4.5" viewBox="0 0 7.5 4.5"><path d="M0 0H7.5L3.75 4.5Z" fill="#757575"/></svg>
<div style="position:absolute;left:356px;top:629px;width:77px;height:1px;background:#e4e4e4"></div>
<svg style="position:absolute;left:456.6px;top:607.1px" width="15.5" height="15.5" viewBox="0 0 15.5 15.5"><rect x="0" y="0" width="15.5" height="15.5" rx="2" fill="#6499f7"/><path d="M2.6 8.6 L5.9 11.6 L12.3 5" stroke="#fff" stroke-width="1.7" fill="none"/></svg>
<div style="position:absolute;left:520.8px;top:605.6px;width:28.4px;height:23px;background:#fff;border-radius:2px;box-shadow:0 1px 3px rgba(0,0,0,.3)"></div>
<div style="position:absolute;left:524px;top:609.7px;width:14.8px;height:14.3px;background:#2ea9c9;border-radius:2px"></div>
<svg style="position:absolute;left:541.2px;top:615.00px" width="6.8" height="3.4" viewBox="0 0 6.8 3.4"><path d="M0 0H6.8L3.4 3.4Z" fill="#616161"/></svg>
<div class="t" style="left:567.2px;top:611.59px;font-size:11px;color:#3a3a3a;font-weight:400;letter-spacing:0px;">Left</div>
<svg style="position:absolute;left:636.3px;top:615.50px" width="7.5" height="4.5" viewBox="0 0 7.5 4.5"><path d="M0 0H7.5L3.75 4.5Z" fill="#757575"/></svg>
<div style="position:absolute;left:567px;top:629px;width:77px;height:1px;background:#e4e4e4"></div>
<svg style="position:absolute;left:667.7px;top:607.1px" width="15.5" height="15.5" viewBox="0 0 15.5 15.5"><rect x="0" y="0" width="15.5" height="15.5" rx="2" fill="#6499f7"/><path d="M2.6 8.6 L5.9 11.6 L12.3 5" stroke="#fff" stroke-width="1.7" fill="none"/></svg>
<div style="position:absolute;left:727.3px;top:607.3px;width:15.5px;height:15px;border:2px solid #747474;border-radius:2px;box-sizing:border-box"></div>
<div style="position:absolute;left:799.6px;top:608.59px;width:129.4px;height:18px;overflow:hidden"><div class="t" style="left:0;top:3px;font-size:11px;color:#2b2b2b;transform:scaleX(0.929);transform-origin:0 0">1,2-DICHLOROETHANE</div></div>
<div style="position:absolute;left:800px;top:629px;width:131px;height:1px;background:#e4e4e4"></div>
<div style="position:absolute;left:965px;top:609.9px;width:15px;height:15px;background:#ebebef"></div>
<svg style="position:absolute;left:965px;top:609.90px" width="15" height="15" viewBox="0 0 15 15"><path d="M4.2 6.0 L7.5 2.9 L10.8 6.0 M4.2 9.0 L7.5 12.1 L10.8 9.0" stroke="#8e8e98" stroke-width="1.4" fill="none"/></svg>
<div style="position:absolute;left:950px;top:629px;width:32px;height:1px;background:#e4e4e4"></div>
<div style="position:absolute;left:1016px;top:609.9px;width:15px;height:15px;background:#ebebef"></div>
<svg style="position:absolute;left:1016px;top:609.90px" width="15" height="15" viewBox="0 0 15 15"><path d="M4.2 6.0 L7.5 2.9 L10.8 6.0 M4.2 9.0 L7.5 12.1 L10.8 9.0" stroke="#8e8e98" stroke-width="1.4" fill="none"/></svg>
<div style="position:absolute;left:1001.5px;top:629px;width:31.5px;height:1px;background:#e4e4e4"></div>
<svg style="position:absolute;left:1051.2px;top:609.2px" width="18.9" height="17.6" viewBox="0 0 18.9 17.6"><rect x="0.6" y="0.6" width="17.7" height="16.4" rx="3" fill="#e9e9ed" stroke="#8f8f9d" stroke-width="1"/><path d="M6.0 12.6 L9.1 6.6 L12.1 12.6Z" fill="#000"/></svg>
<svg style="position:absolute;left:1072.3px;top:609.2px" width="18.9" height="17.6" viewBox="0 0 18.9 17.6"><rect x="0.6" y="0.6" width="17.7" height="16.4" rx="3" fill="#e9e9ed" stroke="#8f8f9d" stroke-width="1"/><path d="M6.6 6.6 L12.8 6.6 L9.7 12.6Z" fill="#000"/></svg>
<svg style="position:absolute;left:1094.2px;top:609.2px" width="18.9" height="17.6" viewBox="0 0 18.9 17.6"><rect x="0.6" y="0.6" width="17.7" height="16.4" rx="3" fill="#e9e9ed" stroke="#8f8f9d" stroke-width="1"/><path d="M5.7 6.2 L12.3 12.2 M12.3 6.2 L5.7 12.2" stroke="#ff6b6b" stroke-width="1.6"/></svg>
<div style="position:absolute;left:23.6px;top:654px;width:288.99px;height:23.5px;background:#ececec;border:1px solid #c8c8c8;border-radius:4px;box-sizing:border-box"></div>
<div style="position:absolute;left:45.8px;top:655px;width:1px;height:22px;background:#dadada"></div>
<div style="position:absolute;left:68.1px;top:655px;width:1px;height:22px;background:#dadada"></div>
<div style="position:absolute;left:90.3px;top:655px;width:1px;height:22px;background:#dadada"></div>
<div style="position:absolute;left:112.5px;top:655px;width:1px;height:22px;background:#dadada"></div>
<div style="position:absolute;left:134.8px;top:655px;width:1px;height:22px;background:#dadada"></div>
<div style="position:absolute;left:157.0px;top:655px;width:1px;height:22px;background:#dadada"></div>
<div style="position:absolute;left:179.2px;top:655px;width:1px;height:22px;background:#dadada"></div>
<div style="position:absolute;left:201.4px;top:655px;width:1px;height:22px;background:#dadada"></div>
<div style="position:absolute;left:223.7px;top:655px;width:1px;height:22px;background:#dadada"></div>
<div style="position:absolute;left:245.9px;top:655px;width:1px;height:22px;background:#dadada"></div>
<div style="position:absolute;left:268.1px;top:655px;width:1px;height:22px;background:#dadada"></div>
<div style="position:absolute;left:290.4px;top:655px;width:1px;height:22px;background:#dadada"></div>
<div style="position:absolute;left:68.06px;top:655.1px;width:22.23px;height:21.7px;background:linear-gradient(#3f7bb8,#2c65a0)"></div>
<div class="t" style="left:76.2527px;top:660.61px;font-size:10.5px;color:#fff;font-weight:400;letter-spacing:0px;">1</div>
<div class="t" style="left:98.48499999999999px;top:660.61px;font-size:10.5px;color:#3a3a3a;font-weight:400;letter-spacing:0px;">2</div>
<div class="t" style="left:120.715px;top:660.61px;font-size:10.5px;color:#3a3a3a;font-weight:400;letter-spacing:0px;">3</div>
<div class="t" style="left:142.94500000000002px;top:660.61px;font-size:10.5px;color:#3a3a3a;font-weight:400;letter-spacing:0px;">4</div>
<div class="t" style="left:165.175px;top:660.61px;font-size:10.5px;color:#3a3a3a;font-weight:400;letter-spacing:0px;">5</div>
<div class="t" style="left:187.40500000000003px;top:660.61px;font-size:10.5px;color:#3a3a3a;font-weight:400;letter-spacing:0px;">6</div>
<div class="t" style="left:209.63500000000002px;top:660.61px;font-size:10.5px;color:#3a3a3a;font-weight:400;letter-spacing:0px;">7</div>
<div class="t" style="left:231.865px;top:660.61px;font-size:10.5px;color:#3a3a3a;font-weight:400;letter-spacing:0px;">8</div>
<div class="t" style="left:252.64px;top:660.61px;font-size:10.5px;color:#666;font-weight:400;letter-spacing:0px;">...</div>
<svg style="position:absolute;left:32.77px;top:662.3px" width="5.3" height="6.7" viewBox="0 0 5.3 6.7"><rect x="0" y="0" width="1.3" height="6.7" fill="#bdbdbd"/><path d="M1.6 3.35 L5.3 0 V6.7Z" fill="#bdbdbd"/></svg>
<svg style="position:absolute;left:55.80px;top:662.3px" width="3.7" height="6.7" viewBox="0 0 3.7 6.7"><path d="M0 3.35 L3.7 0 V6.7Z" fill="#bdbdbd"/></svg>
<svg style="position:absolute;left:278.09px;top:662.3px" width="3.7" height="6.7" viewBox="0 0 3.7 6.7"><path d="M3.7 3.35 L0 0 V6.7Z" fill="#4a4a4a"/></svg>
<svg style="position:absolute;left:299.53px;top:662.3px" width="5.3" height="6.7" viewBox="0 0 5.3 6.7"><path d="M3.7 3.35 L0 0 V6.7Z" fill="#4a4a4a"/><rect x="4" y="0" width="1.3" height="6.7" fill="#4a4a4a"/></svg>
<div style="position:absolute;left:322.3px;top:654px;width:44.4px;height:23.5px;background:#ececec;border:1px solid #c8c8c8;border-radius:4px;box-sizing:border-box"></div>
<div class="t" style="left:334px;top:660.61px;font-size:10.5px;color:#3a3a3a;font-weight:400;letter-spacing:0px;">5</div>
<svg style="position:absolute;left:354px;top:664.5px" width="7" height="3.6" viewBox="0 0 7 3.6"><path d="M0 0H7L3.5 3.6Z" fill="#333"/></svg>
<div class="t" style="right:18.5px;top:660.96px;font-size:10.8px;color:#555">1 of 724 pages (3620 items)</div>
</body></html>
